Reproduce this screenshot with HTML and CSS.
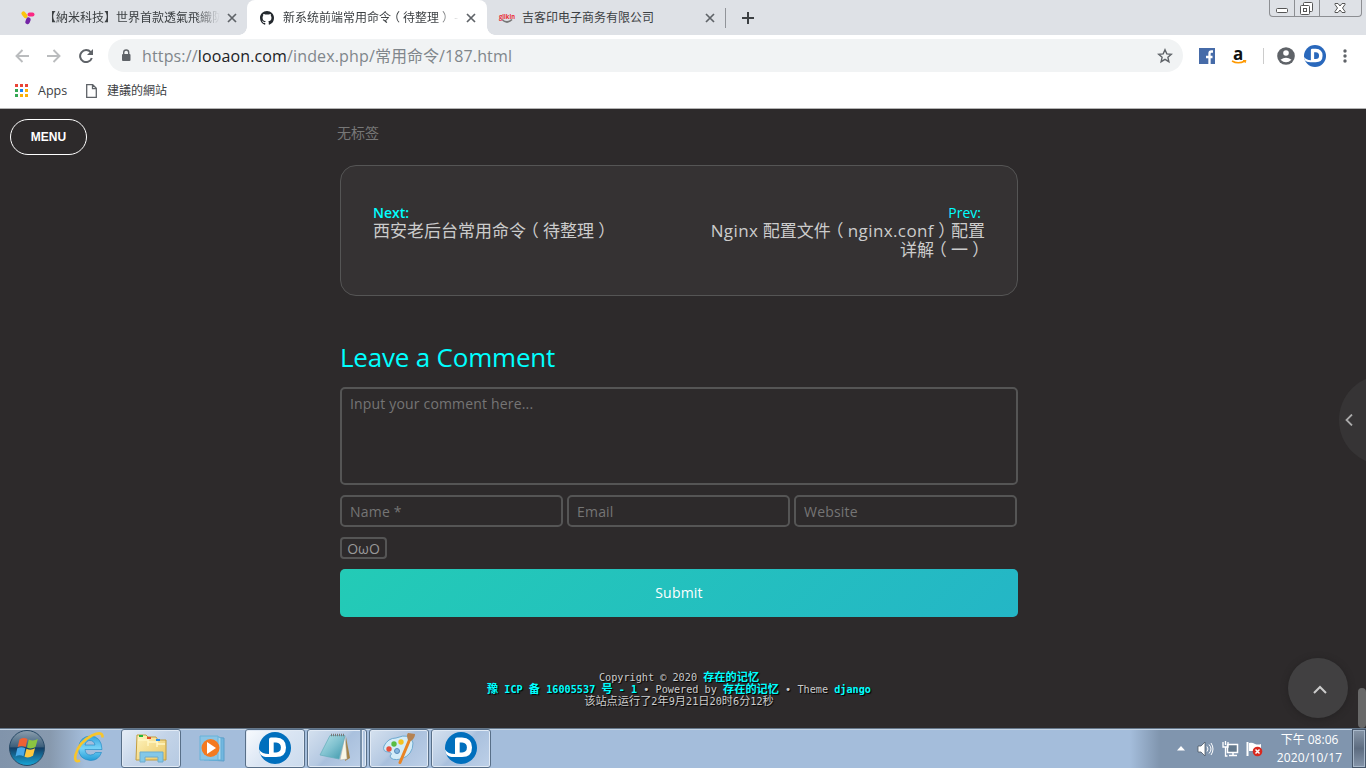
FILE: index.html
```html
<!DOCTYPE html>
<html lang="zh">
<head>
<meta charset="utf-8">
<title>新系统前端常用命令（待整理）</title>
<link rel="stylesheet" href="styles.css">
</head>
<body>
<svg class="defs" width="0" height="0" aria-hidden="true">
  <defs>
    <linearGradient id="orb" x1="0" y1="0" x2="0" y2="1"><stop offset="0" stop-color="#8d9fae"/><stop offset=".46" stop-color="#3e607c"/><stop offset=".5" stop-color="#123e65"/><stop offset="1" stop-color="#19a7d8"/></linearGradient>
    <linearGradient id="ie" x1="0" y1="0" x2="0" y2="1"><stop offset="0" stop-color="#36a4dc"/><stop offset=".5" stop-color="#77d3f7"/><stop offset="1" stop-color="#239bd6"/></linearGradient>
    <linearGradient id="pad" x1="0" y1="0" x2="1" y2="1"><stop offset="0" stop-color="#b7e2e8"/><stop offset=".5" stop-color="#7fc1cf"/><stop offset="1" stop-color="#3b96aa"/></linearGradient>
    <linearGradient id="folder" x1="0" y1="0" x2="1" y2="1"><stop offset="0" stop-color="#fff5c0"/><stop offset="1" stop-color="#eac661"/></linearGradient>
    <symbol id="close" viewBox="0 0 10 10"><path d="M1 1l8 8M9 1L1 9" fill="none" stroke="#5f6368" stroke-width="1.7"/></symbol>
    <symbol id="dlogo" viewBox="0 0 32 32"><circle cx="16" cy="16" r="16" fill="currentColor"/><path d="M0 17.500Q3 22 10 22V7.500Q10 5.500 12 5.500H17Q27 6 27 15.500T17 25H11Q4 25.500 1.500 22.500Q.2 20 0 17.500Z" fill="#fff"/><path d="M14.700 10.500h2.500q4.700.5 4.700 5t-4.700 5h-2.500z" fill="currentColor"/></symbol>
  </defs>
</svg>

<header class="browser">
  <div class="tabs">
    <div class="tab tab-first">
      <svg class="fav" width="16" height="16" viewBox="0 0 16 16"><path d="M3.500 3.500L5.500 6" stroke="#fbc50b" stroke-width="4.200" stroke-linecap="round"/><path d="M9.500 4.500h3" stroke="#fb2783" stroke-width="4" stroke-linecap="round"/><path d="M8.500 9.500L7.500 12" stroke="#7424a6" stroke-width="4.500" stroke-linecap="round"/></svg>
      <span class="title fade">【納米科技】世界首款透氣飛織防</span>
      <svg class="x" width="10" height="10"><use href="#close"/></svg>
    </div>
    <div class="tab tab-active">
      <svg class="fav" width="14" height="14" viewBox="0 0 16 16"><path fill="#24292e" d="M8 0C3.580 0 0 3.580 0 8c0 3.540 2.290 6.530 5.470 7.590.4.070.55-.17.55-.38 0-.19-.01-.82-.01-1.490-2.010.37-2.530-.49-2.690-.94-.09-.23-.48-.94-.82-1.130-.28-.15-.68-.52-.01-.53.63-.01 1.080.58 1.230.82.72 1.210 1.870.87 2.330.66.070-.52.28-.87.510-1.070-1.780-.2-3.640-.89-3.640-3.950 0-.87.310-1.590.82-2.150-.08-.2-.36-1.020.08-2.120 0 0 .67-.21 2.200.82a7.600 7.600 0 0 1 4 0c1.530-1.040 2.200-.82 2.200-.82.44 1.100.16 1.920.08 2.120.51.56.82 1.270.82 2.150 0 3.070-1.870 3.750-3.650 3.950.29.25.54.73.54 1.480 0 1.070-.01 1.930-.01 2.200 0 .21.15.46.55.38A8.010 8.010 0 0 0 16 8c0-4.420-3.580-8-8-8z"/></svg>
      <span class="title fade">新系统前端常用命令<span class="po">（</span>待整理<span class="pc">）</span> -</span>
      <svg class="x" width="10" height="10"><use href="#close"/></svg>
    </div>
    <div class="tab tab-last">
      <svg class="fav" width="18" height="16" viewBox="0 0 18 16"><path d="M4 9.500q5 5 10 0" fill="none" stroke="#777" stroke-width="1.700"/><text x="1" y="8.500" class="giikin" textLength="16" lengthAdjust="spacingAndGlyphs">giikin</text></svg>
      <span class="title">吉客印电子商务有限公司</span>
      <svg class="x" width="10" height="10"><use href="#close"/></svg>
    </div>
    <svg class="plus" width="12" height="12" viewBox="0 0 12 12"><path d="M6 0v12M0 6h12" stroke="#3c4043" stroke-width="2"/></svg>
    <div class="winctl">
      <span class="wc"><svg width="24" height="16" viewBox="0 0 24 16"><rect x="6.500" y="8.500" width="11" height="4" rx="1" fill="#fff" stroke="#555"/></svg></span>
      <span class="wc"><svg width="24" height="16" viewBox="0 0 24 16"><g fill="#fff" stroke="#555"><rect x="8.500" y="2.500" width="9" height="9" rx="1"/><rect x="5.500" y="5.500" width="9" height="9" rx="1"/><rect x="8.500" y="8.500" width="3" height="3"/></g></svg></span>
      <span class="wc wide"><svg width="41" height="16" viewBox="0 0 41 16"><path d="M15 3.500h3l2 2.500 2-2.500h3v1L22.500 8l2.500 3.500v1h-3L20 10l-2 2.500h-3v-1L17.500 8 15 4.500z" fill="#fff" stroke="#555"/></svg></span>
    </div>
  </div>

  <div class="toolbar">
    <div class="nav">
      <svg width="14" height="14" viewBox="0 0 14 14"><path d="M14 7H1.500M7.500 1L1.500 7l6 6" fill="none" stroke="#babcbe" stroke-width="1.900"/></svg>
      <svg width="14" height="14" viewBox="0 0 14 14"><path d="M0 7h12.500M6.500 1l6 6-6 6" fill="none" stroke="#babcbe" stroke-width="1.900"/></svg>
      <svg width="14" height="14" viewBox="0 0 14 14"><path d="M11.700 3.200A6 6 0 1 0 12.800 9" fill="none" stroke="#5f6368" stroke-width="2"/><path d="M14 0v6H8z" fill="#5f6368"/></svg>
    </div>
    <div class="omnibox">
      <svg width="10" height="13" viewBox="0 0 10 13"><rect x="1" y="5" width="8.500" height="7" rx="1" fill="#5f6368"/><path d="M2.700 6V3.500a2.500 2.500 0 0 1 5 0V6" fill="none" stroke="#5f6368" stroke-width="1.400"/></svg>
      <span class="url">https://<b>looaon.com</b>/index.php/<i>常用命令</i>/187.html</span>
      <svg class="star" width="16" height="16" viewBox="0 0 16 16"><path d="M8 1.800l1.800 4.100 4.500.4-3.400 3 1 4.400L8 11.400l-3.900 2.300 1-4.400-3.400-3 4.500-.4z" fill="none" stroke="#5f6368" stroke-width="1.400"/></svg>
    </div>
    <div class="ext">
      <svg width="16" height="16" viewBox="0 0 16 16"><rect width="16" height="16" fill="#466ba8"/><path d="M14 3.500h-1.500q-2 0-2 2V16M7 9h6.500" fill="none" stroke="#fff" stroke-width="2.300"/></svg>
      <svg class="amazon" width="16" height="17" viewBox="0 0 16 17"><text x="1" y="13" class="amz">a</text><path d="M0 14q6 3.500 13 0" fill="none" stroke="#f90" stroke-width="1.500"/><path d="M11 13.500h3l-1 2.500" fill="none" stroke="#f90"/></svg>
      <span class="sep"></span>
      <svg class="user" width="18" height="18" viewBox="0 0 18 18"><circle cx="9" cy="9" r="8.800" fill="#5f6368"/><circle cx="9" cy="6" r="2.800" fill="#fff"/><path d="M3.500 12.800q5.500-4.300 11 0-5.500 5-11 0z" fill="#fff"/></svg>
      <svg class="dmini" width="22" height="22"><use href="#dlogo"/></svg>
      <svg class="dots" width="4" height="14" viewBox="0 0 4 14"><g fill="#5f6368"><circle cx="2" cy="2" r="1.700"/><circle cx="2" cy="7" r="1.700"/><circle cx="2" cy="12" r="1.700"/></g></svg>
    </div>
  </div>

  <div class="bookmarks">
    <svg width="13" height="13" viewBox="0 0 13 13"><path d="M0 0h3v3H0zM5 0h3v3H5zM10 0h3v3h-3z" fill="#ea4335"/><path d="M0 5h3v3H0zM0 10h3v3H0z" fill="#34a853"/><path d="M5 5h3v3H5z" fill="#1a84f5"/><path d="M10 5h3v3h-3zM5 10h3v3H5zM10 10h3v3h-3z" fill="#fbb005"/></svg>
    <span class="apps">Apps</span>
    <svg class="doc" width="11" height="14" viewBox="0 0 11 14"><path d="M.7.700h6l3.600 3.600v9H.7zM6.500.700v4h4" fill="none" stroke="#5f6368" stroke-width="1.300"/></svg>
    <span>建議的網站</span>
  </div>
</header>

<main class="page">
  <button class="menu">MENU</button>
  <div class="column">
    <p class="tags">无标签</p>
    <nav class="pager">
      <div class="next"><span class="dir">Next:</span><span>西安老后台常用命令<span class="po">（</span>待整理<span class="pc">）</span></span></div>
      <div class="prev"><span class="dir">Prev:</span><span><em>Nginx</em> 配置文件<span class="po">（</span><em>nginx.conf</em><span class="pc">）</span>配置<br>详解<span class="po">（</span>一<span class="pc">）</span></span></div>
    </nav>
    <h2>Leave a Comment</h2>
    <form class="comment">
      <textarea placeholder="Input your comment here..."></textarea>
      <div class="fields"><input placeholder="Name *"><input placeholder="Email"><input placeholder="Website"></div>
      <span class="owo">OωO</span>
      <button type="button" class="submit">Submit</button>
    </form>
    <footer class="credits">
      <div>Copyright © 2020 <a class="han">存在的记忆</a></div>
      <div><a><span class="han">豫</span> ICP <span class="han">备</span> 16005537 <span class="han">号</span> - 1</a> • Powered by <a class="han">存在的记忆</a> • Theme <a>django</a></div>
      <div><span class="han">该站点运行了</span>2<span class="han">年</span>9<span class="han">月</span>21<span class="han">日</span>20<span class="han">时</span>6<span class="han">分</span>12<span class="han">秒</span></div>
    </footer>
  </div>
  <div class="drawer"><svg width="8" height="12" viewBox="0 0 8 12"><path d="M7 .5L1.500 6 7 11.500" fill="none" stroke="#aaa" stroke-width="1.800"/></svg></div>
  <div class="totop"><svg width="14" height="9" viewBox="0 0 14 9"><path d="M1 8l6-6 6 6" fill="none" stroke="#ccc" stroke-width="2"/></svg></div>
  <div class="thumb"></div>
</main>

<footer class="taskbar">
  <div class="launch start"><svg width="38" height="38" viewBox="0 0 38 38"><circle cx="19" cy="19" r="17.500" fill="url(#orb)" stroke="#294b68"/><path d="M11.500 10.500q4-2.500 8-.5l-1.800 8q-4-2-8 0z" fill="#ef6134"/><path d="M20.800 10.500q4.500 2 9-.5l-2.300 8q-4.500 2.500-8.500.5z" fill="#8ac541"/><path d="M9.300 19.300q4-2 8 0l-1.800 8q-4-2-8 .2z" fill="#48a9e8"/><path d="M18.500 19.800q4.500 2 8.500-.5l-2 7.500q-4.500 3-8.500 1z" fill="#fdc83e"/></svg></div>
  <div class="launch ieb"><svg width="34" height="34" viewBox="0 0 34 34"><path d="M29 18.500H12q.5 5.500 5.500 5.500 3.500 0 5-2.500h6q-3 8-11 8-12-1-12-12.500 1-11.500 12-12 11 .5 11.500 13.500zM12 14h10q-1-4.500-5-4.500T12 14z" fill="url(#ie)" stroke="#1b86c3" stroke-width=".6"/><path d="M7 29.500Q1 32 2.500 24 6 11 19 4.500q11-5 10.500 2" fill="none" stroke="#f8c52b" stroke-width="2.600"/></svg></div>
  <div class="task explorer"><svg width="34" height="32" viewBox="0 0 34 32"><path d="M3 3h9l2 2h8l2 3h8v20H2z" fill="url(#folder)" stroke="#c39d3d"/><path d="M4 8h9l2 2h8l1 2h7M14 6v8M23 9v6" fill="none" stroke="#fff6c4" stroke-width="1.500"/><path d="M5 3h4v2H5z" fill="#22b83a"/><path d="M13 5h4v2h-4z" fill="#e24b28"/><path d="M22 7h4v2h-4z" fill="#268ceb"/><path d="M6 30V20h23v10h-5v-5H11v5z" fill="#83c8e8" stroke="#6caccf"/></svg></div>
  <div class="launch wmp"><svg width="32" height="30" viewBox="0 0 32 30"><path d="M10 4l15 1v23l-15-1z" fill="#72b7df" stroke="#5b9fca"/><path d="M5 4h15l2 1v22H5z" fill="#a7d6ed" stroke="#64add5"/><path d="M1 3h18v24H1z" fill="#8bc5e5" stroke="#69b2d9"/><circle cx="11.500" cy="15" r="9" fill="#f47a20"/><path d="M8 9l9 6-9 6z" fill="#fff"/></svg></div>
  <div class="task live"><svg class="dbig" width="32" height="32"><use href="#dlogo"/></svg></div>
  <div class="task notepad"><svg width="32" height="32" viewBox="0 0 32 32"><path d="M27 5l4 21-5 3z" fill="#a48346"/><path d="M26 4l2 23-7 1z" fill="#f9f7e6" stroke="#aaa" stroke-width=".5"/><path d="M11 3.500h15L20 27 1 23z" fill="url(#pad)" stroke="#63aeba" stroke-width=".7"/><path d="M12 3h14" stroke="#777" stroke-width="2.500" stroke-dasharray="1 1"/></svg></div>
  <div class="task paint"><svg width="34" height="34" viewBox="0 0 34 34"><path d="M14 7q15-6 17 5 0 12-12 16-10 2-11-3 3-3-1-4-7 0-5-6 4-8 12-8z" fill="#d3ecf8" stroke="#6ea9cf"/><circle cx="12" cy="13" r="2.700" fill="#59bd43"/><circle cx="19" cy="11" r="2.700" fill="#f3c222"/><circle cx="7" cy="18" r="2.700" fill="#e8503c"/><circle cx="15" cy="20" r="2.500" fill="#82b6df" stroke="#5689b9"/><path d="M27.500 9L18 31.500" stroke="#e98424" stroke-width="3" stroke-linecap="round"/><path d="M26 9q-2-5 0-7l7 1q0 4-4 7z" fill="#b58252"/></svg></div>
  <div class="task dlast"><svg class="dbig" width="32" height="32"><use href="#dlogo"/></svg></div>
  <div class="tray">
    <svg width="8" height="5" viewBox="0 0 8 5"><path d="M0 4.500L4 0l4 4.500z" fill="#fff"/></svg>
    <svg class="speaker" width="17" height="16" viewBox="0 0 17 16"><path d="M1 5h3l4-4v14l-4-4H1z" fill="#fff" stroke="#4c5866" stroke-width=".8"/><path d="M10 5.500q2 2.500 0 5M12 3.500q4 4.500 0 9M14 2q4 6 0 12" fill="none" stroke="#fff"/></svg>
    <svg class="net" width="17" height="16" viewBox="0 0 17 16"><path d="M5.500 3.500h10v8h-10z" fill="#64798d" stroke="#fff" stroke-width="1.500"/><path d="M7 14.500h8M11 12v2" stroke="#fff" stroke-width="1.500"/><path d="M1 1v5h5V1M3.500 0v4M3.500 6v9h2" fill="none" stroke="#fff" stroke-width="1.300"/></svg>
    <svg class="flag" width="17" height="16" viewBox="0 0 17 16"><path d="M1.500 1v14" stroke="#fff" stroke-width="2"/><path d="M3 2q3-1 6 1 3 1 6 0v7H3z" fill="#fff"/><circle cx="11.500" cy="10.500" r="4.800" fill="#d9281e"/><path d="M9.500 8.500l4 4M13.500 8.500l-4 4" stroke="#fff" stroke-width="1.500"/></svg>
    <div class="clock"><span>下午 08:06</span><span class="date">2020/10/17</span></div>
    <div class="peek"></div>
  </div>
</footer>
</body>
</html>
```
FILE: styles.css
```css
* { box-sizing: border-box; }
body { margin: 0; width: 1366px; height: 768px; overflow: hidden; display: flex; flex-direction: column; background: #2d2a2b; font-family: "Open Sans", "Noto Sans CJK SC", sans-serif; }
svg { display: block; flex: none; }
.defs { position: absolute; }
button, input, textarea { font: inherit; }
/* centre full-width parentheses in their em box */
.po { margin: 0 .25em 0 -.25em; }
.pc { margin: 0 -.25em 0 .25em; }

.browser { height: 109px; background: #fff; border-bottom: 1px solid #b3b3b3; flex: none; font-family: "Open Sans", "Noto Sans CJK TC", sans-serif; color: #3c4043; }
.tabs { height: 35px; background: #dee1e6; display: flex; align-items: center; }
.tab { height: 35px; display: flex; align-items: center; font-size: 12px; line-height: 18px; }
.tab-first { width: 247px; padding-left: 20px; }
.tab-active { width: 240px; padding-left: 13px; background: #fff; border-radius: 8px 8px 0 0; position: relative; }
.tab-active::before, .tab-active::after { content: ""; position: absolute; bottom: 0; width: 8px; height: 8px; }
.tab-active::before { left: -8px; background: radial-gradient(circle at 0 0, #dee1e6 7.5px, #fff 8px); }
.tab-active::after { right: -8px; background: radial-gradient(circle at 100% 0, #dee1e6 7.5px, #fff 8px); }
.tab-last { width: 239px; padding-left: 11px; }
.tab-last::after { content: ""; width: 1px; height: 20px; background: #919499; margin-left: 10px; }
.title { white-space: pre; overflow: hidden; }
.tab-first .title { width: 176px; margin-left: 8px; }
.tab-active .fav { margin-right: 9px; }
.tab-active .title { width: 177px; }
.tab-last .title { margin-left: 6px; width: 175px; }
.fade { -webkit-mask-image: linear-gradient(90deg, #000 86%, transparent); mask-image: linear-gradient(90deg, #000 86%, transparent); }
.x { margin-left: 7px; }
.tab-active .x { margin-left: 6px; }
.tab-last .x { margin-left: 8px; }
.giikin { font: 700 7px "Open Sans", sans-serif; fill: #e82c35; }
.plus { margin-left: 16px; }
.winctl { margin-left: auto; margin-right: 4px; align-self: flex-start; height: 17px; display: flex; border: 1px solid #8c8e92; border-top: 0; border-radius: 0 0 4px 4px; }
.wc + .wc { border-left: 1px solid #8c8e92; }

.toolbar { height: 41px; display: flex; align-items: center; }
.nav { display: flex; gap: 18px; padding-left: 15px; width: 108px; }
.omnibox { width: 1075px; height: 33px; border-radius: 17px; background: #f1f3f4; display: flex; align-items: center; padding-left: 13px; }
.url { margin-left: 11px; font-size: 16px; line-height: 24px; color: #80868b; white-space: pre; letter-spacing: .14px; }
.url b { font-weight: 400; color: #202124; }
.url i { font-style: normal; letter-spacing: 0; }
.star { margin-left: auto; margin-right: 10px; }
.ext { display: flex; align-items: center; padding-left: 16px; }
.amazon { margin-left: 17px; overflow: visible; }
.amz { font: 700 17px "Open Sans", sans-serif; fill: #111; }
.sep { width: 1px; height: 16px; background: #ccc; margin: 0 13px 0 15px; }
.user { margin-right: 9px; }
.dmini { color: #2968bc; margin-right: 17px; }
.bookmarks { height: 29px; display: flex; align-items: center; padding-left: 15px; font-size: 12px; line-height: 16px; }
.apps { margin-left: 10px; width: 48px; font-size: 12.500px; }
.doc { margin-right: 10px; }

.page { height: 619px; flex: none; position: relative; background: #2d2a2b; color: #ccc; }
.menu { position: absolute; left: 10px; top: 10px; width: 77px; height: 36px; padding: 0; border: 1px solid #fff; border-radius: 18px; background: transparent; color: #fff; font: 700 12px "Liberation Sans", sans-serif; }
.column { width: 678px; margin-left: 340px; padding-top: 14px; }
.tags { margin: 0 0 0 -3px; font-size: 14px; line-height: 20px; color: #777; height: 42px; }
.pager { height: 131px; display: flex; justify-content: space-between; border: 1px solid #555; border-radius: 16px; background: #353233; padding: 37px 32px 0; font-size: 17px; line-height: 19px; }
.next, .prev { display: flex; flex-direction: column; white-space: nowrap; }
.prev { text-align: right; }
.dir { color: #0ff; font-size: 14px; height: 18px; font-weight: 500; }
.next .dir { font-weight: 600; }
.prev .dir { margin-right: 4px; }
em { font-style: normal; letter-spacing: .4px; }
h2 { margin: 42px 0 0; height: 49px; line-height: 38px; font-size: 26px; letter-spacing: -.2px; font-weight: 400; color: #0ff; }
.comment { display: flex; flex-direction: column; align-items: flex-start; }
textarea, input { display: block; background: transparent; border: 2px solid #555; border-radius: 5px; outline: 0; color: #ccc; font-size: 14px; resize: none; margin: 0; }
textarea { width: 678px; height: 98px; padding: 5px 8px; line-height: 20px; letter-spacing: .17px; overflow: hidden; }
::placeholder { color: #757575; opacity: 1; }
.fields { display: flex; gap: 4px; margin-top: 10px; }
input { width: 223px; height: 32px; padding: 1px 8px; letter-spacing: .2px; }
.owo { margin-top: 10px; width: 47px; height: 22px; border: 2px solid #555; border-radius: 4px; color: #999; font-size: 14px; line-height: 20px; text-align: center; }
.submit { margin-top: 10px; width: 678px; height: 48px; padding-bottom: 3px; border: 0; border-radius: 5px; background: linear-gradient(135deg, #23cbb6, #24b6c6); color: #fff; font-size: 14px; letter-spacing: .2px; }
.credits { margin-top: 54px; font: 10.2px/12px "DejaVu Sans Mono", monospace; text-align: center; text-shadow: 1px 1px 1px #000; }
.credits div { height: 12px; white-space: nowrap; }
.credits a { color: #0ff; font-weight: 700; }
.han { font-family: "Noto Sans CJK SC", sans-serif; font-size: 11.2px; line-height: 1; }
.drawer { position: absolute; right: 0; top: 266px; width: 27px; height: 90px; overflow: hidden; display: flex; align-items: center; padding-left: 6px; }
.drawer::before { content: ""; position: absolute; left: 0; top: 0; width: 90px; height: 90px; border-radius: 50%; background: #363435; }
.drawer svg { position: relative; }
.totop { position: absolute; right: 18px; bottom: 10px; width: 60px; height: 60px; border-radius: 50%; background: #414041; display: flex; align-items: center; justify-content: center; padding: 3px 0 0 3px; box-shadow: 0 1px 6px #242223; }
.thumb { position: absolute; right: 0; bottom: 0; width: 8px; height: 40px; border-radius: 4px; background: #686868; }

.taskbar { height: 40px; flex: none; display: flex; align-items: stretch; border-top: 1px solid #65778a; box-shadow: inset 0 1px #c3d3e4; background: linear-gradient(90deg, #8194ab 0, #8799ae 50px, #a4bddb 85px, #a4bddb 1130px, #8095ae 1160px); }
.launch, .task { display: flex; align-items: center; justify-content: center; padding-bottom: 1px; }
.start { width: 54px; }
.ieb { width: 67px; padding-left: 4px; }
.wmp { width: 64px; padding-left: 3px; }
.task { width: 60px; border: 1px solid #586f88; border-radius: 3px; box-shadow: inset 0 0 0 1px #e1eaf5; background: linear-gradient(135deg, #d5e1ef, #b5c9e2 45%, #a9c0dd 50%, #bdd0e8); }
.explorer { background: linear-gradient(135deg, #e5edf6, #c4d4e8 50%, #b6cae2); }
.live { background: linear-gradient(135deg, #f8fbfe, #dae5f3 50%, #cbdbed); }
.notepad { width: 60px; margin-left: 2px; padding-right: 4px; position: relative; }
.notepad::after { content: ""; position: absolute; right: 3px; top: 0; width: 2px; height: 37px; background: #7890aa; border-right: 1px solid #e1eaf5; }
.paint, .dlast { margin-left: 2px; }
.dbig { color: #006fbd; }
.tray { margin-left: auto; display: flex; align-items: center; }
.speaker { margin-left: 12px; }
.net { margin-left: 8px; }
.flag { margin-left: 7px; }
.clock { width: 89px; padding-left: 4px; display: flex; flex-direction: column; text-align: center; color: #fff; font-size: 12px; line-height: 18px; }
.date { letter-spacing: .2px; }
.peek { width: 14px; height: 39px; border: 1px solid #46566a; box-shadow: inset 0 0 0 1px #a8b8ca; background: linear-gradient(#8796a8, #5d6c80 50%, #8595aa); }
```
